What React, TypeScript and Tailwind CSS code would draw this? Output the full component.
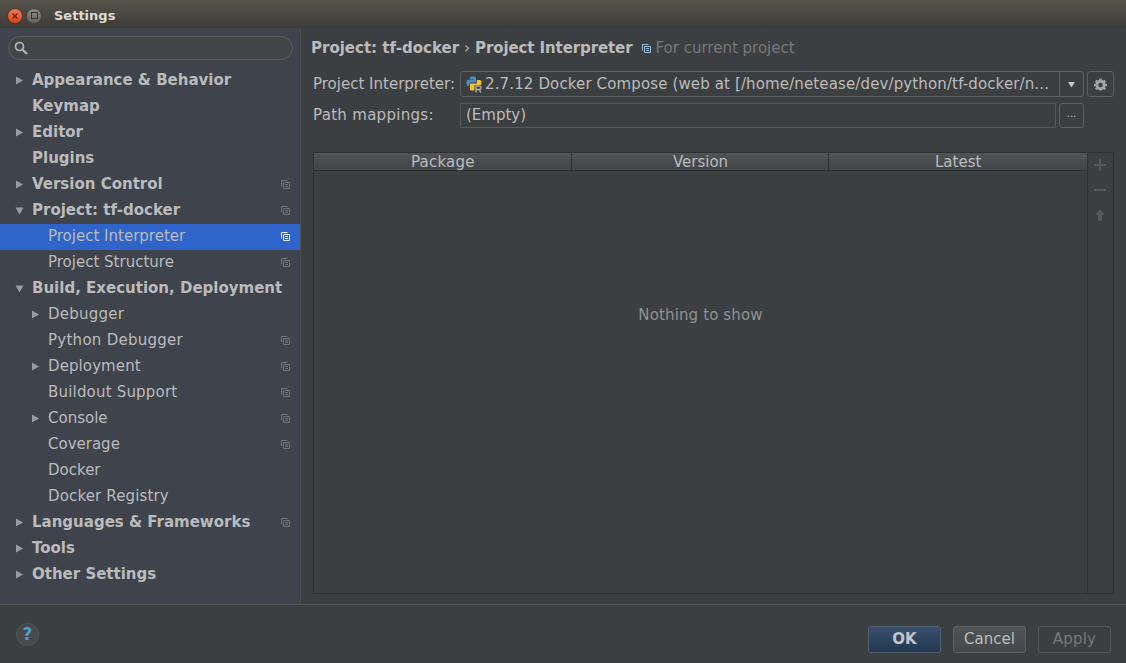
import React from 'react';

type NavItem = {
  label: string;
  level: 0 | 1;
  bold?: boolean;
  arrow?: 'right' | 'down';
  copy?: boolean;
  selected?: boolean;
  track?: string;
};

const navItems: NavItem[] = [
  { label: 'Appearance & Behavior', level: 0, bold: true, arrow: 'right' },
  { label: 'Keymap', level: 0, bold: true },
  { label: 'Editor', level: 0, bold: true, arrow: 'right' },
  { label: 'Plugins', level: 0, bold: true },
  { label: 'Version Control', level: 0, bold: true, arrow: 'right', copy: true },
  { label: 'Project: tf-docker', level: 0, bold: true, arrow: 'down', copy: true },
  { label: 'Project Interpreter', level: 1, copy: true, selected: true },
  { label: 'Project Structure', level: 1, copy: true },
  { label: 'Build, Execution, Deployment', level: 0, bold: true, arrow: 'down' },
  { label: 'Debugger', level: 1, arrow: 'right', track: 'tracking-[0.25px]' },
  { label: 'Python Debugger', level: 1, copy: true, track: 'tracking-[0.27px]' },
  { label: 'Deployment', level: 1, arrow: 'right', copy: true, track: 'tracking-[0.1px]' },
  { label: 'Buildout Support', level: 1, copy: true, track: 'tracking-[0.19px]' },
  { label: 'Console', level: 1, arrow: 'right', copy: true },
  { label: 'Coverage', level: 1, copy: true },
  { label: 'Docker', level: 1 },
  { label: 'Docker Registry', level: 1, track: 'tracking-[0.14px]' },
  { label: 'Languages & Frameworks', level: 0, bold: true, arrow: 'right', copy: true },
  { label: 'Tools', level: 0, bold: true, arrow: 'right' },
  { label: 'Other Settings', level: 0, bold: true, arrow: 'right' },
];

function CopyIcon({ color, className }: { color: string; className?: string }) {
  return (
    <svg className={className} width="9" height="9" viewBox="0 0 9 9" fill="none" stroke={color}>
      <path d="M2.5 8.5V2.5H8.5V8.5H2.5Z" />
      <path d="M0.5 6.5V0.5H6.5" />
      <path d="M4 4.5H7M4 6.5H7" />
    </svg>
  );
}

function Arrow({ dir }: { dir: 'right' | 'down' }) {
  return (
    <svg width="9" height="9" viewBox="0 0 9 9" fill="#9a9da0">
      {dir === 'right' ? <path d="M1 0.5L8 4.5L1 8.5Z" /> : <path d="M0.5 1.5H8.5L4.5 8.5Z" />}
    </svg>
  );
}

function NavRow({ item }: { item: NavItem }) {
  return (
    <div className={`flex items-center h-[26px] pb-[2px] pr-[10px] ${item.selected ? 'bg-[#2f65ca]' : ''}`}>
      <div className={`flex w-[9px] shrink-0 items-center ${item.level === 1 ? 'ml-[31px] mr-[8px]' : 'ml-[15px] mr-[8px]'}`}>
        {item.arrow && <Arrow dir={item.arrow} />}
      </div>
      <span className={`flex-1 whitespace-nowrap ${item.bold ? 'font-bold' : ''} ${item.track ?? ''} text-[#bbbbbb]`}>{item.label}</span>
      {item.copy && <CopyIcon color={item.selected ? '#e8ecf4' : '#70757c'} />}
    </div>
  );
}

function PythonIcon() {
  return (
    <svg className="shrink-0" width="16" height="17" viewBox="0 0 16 17">
      <path d="M4 1.5C4 .8 5 .5 7 .5S10 1 10 1.8V6.5H5C3.8 6.5 3.2 7.2 3.2 8.5V10H2C.8 10 .5 8.5 .5 6.8S1 3.8 2.2 3.8H7V3.2H4Z" fill="#4b8bbe" />
      <path d="M10.8 4H13.5C14.8 4 15.5 5 15.5 6.8S15 10 13.8 10H9V10.6H12V12H8V11C8 8.5 8.5 7.5 10 7.5H10.8Z" fill="#f2c230" />
      <path d="M4 7.5H9V13C9 14 8.5 14.5 6.5 14.5S4 14 4 13Z" fill="#f2c230" />
      <path d="M8.5 9H16V17H8.5Z" fill="#3c3f41" />
      <path d="M10 16.5V10H13C14.2 10 15 10.6 15 11.8S14.2 13.5 13 13.5H10.5M12.8 13.5L15 16.5" fill="none" stroke="#a8abae" strokeWidth="1.4" />
    </svg>
  );
}

export default function App() {
  return (
    <div className="flex flex-col w-[1126px] h-[663px] overflow-hidden bg-[#3c3f41] text-[15px] text-[#bbbbbb] font-['DejaVu_Sans',sans-serif]">
      {/* title bar */}
      <div className="flex items-center h-[28px] shrink-0 bg-gradient-to-b from-[#57544b] to-[#3c3b37] pl-[7px] pt-[3px]">
        <div className="flex h-[16px] w-[16px] items-center justify-center rounded-full bg-gradient-to-b from-[#f5794a] to-[#db4417] border border-[#4a3a30]">
          <svg width="8" height="8" viewBox="0 0 8 8" stroke="#5a2410" strokeWidth="1.2"><path d="M1.5 1.5L6.5 6.5M6.5 1.5L1.5 6.5" /></svg>
        </div>
        <div className="ml-[3px] flex h-[16px] w-[16px] items-center justify-center rounded-full bg-gradient-to-b from-[#8a8980] to-[#65645d] border border-[#45443e]">
          <div className="h-[7px] w-[7px] border border-[#35342f]" />
        </div>
        <span className="ml-[12px] text-[13px] font-bold text-[#dfdbd2]">Settings</span>
      </div>

      <div className="flex flex-1 min-h-0">
        {/* sidebar */}
        <div className="flex flex-col w-[301px] shrink-0 bg-[#3e434c] border-r border-[#4d4f51] pt-[8px]">
          <div className="mx-[8px] mr-[7px] flex h-[24px] items-center rounded-full border border-[#5e6060] bg-[#414547] pl-[4px]">
            <svg width="16" height="16" viewBox="0 0 16 16" fill="none" stroke="#b4b6b8" strokeWidth="1.7">
              <circle cx="6.5" cy="6.5" r="4" />
              <path d="M9.5 9.5L14 14" strokeWidth="2.2" />
            </svg>
          </div>
          <div className="mt-[8px] mr-[1px] w-[300px]">
            {navItems.map((item) => (
              <NavRow key={item.label} item={item} />
            ))}
          </div>
        </div>

        {/* main */}
        <div className="flex flex-col flex-1 min-w-0 pl-[12px] pr-[12px]">
          <div className="flex items-center h-[20px] mt-[10px] -ml-[2px]">
            <span className="font-bold">Project: tf-docker</span>
            <span className="mx-[5px]">›</span>
            <span className="font-bold tracking-[-0.1px]">Project Interpreter</span>
            <CopyIcon color="#9fc0dc" className="ml-[10px]" />
            <span className="ml-[4px] text-[#787878]">For current project</span>
          </div>

          <div className="flex items-center h-[26px] mt-[13px]">
            <span className="w-[147px] shrink-0 whitespace-nowrap">Project Interpreter:</span>
            <div className="flex flex-1 min-w-0 h-[26px] rounded-[3px] border border-[#5e6060]">
              <div className="flex flex-1 min-w-0 items-center pl-[5px]">
                <PythonIcon />
                <span className="ml-[3px] whitespace-nowrap tracking-[0.13px]">2.7.12 Docker Compose (web at [/home/netease/dev/python/tf-docker/n...</span>
              </div>
              <div className="flex w-[24px] shrink-0 items-center justify-center border-l border-[#5e6060]">
                <svg width="9" height="7" viewBox="0 0 9 7" fill="#c4c6c8"><path d="M1 1H8L4.5 6.5Z" /></svg>
              </div>
            </div>
            <div className="flex h-[26px] w-[27px] shrink-0 ml-[3px] items-center justify-center rounded-[3px] border border-[#5e6060]">
              <svg width="13" height="13" viewBox="0 0 14 14" fill="#a2a5a8">
                <path fillRule="evenodd" d="M5.8 1H8.2L8.6 2.7L9.9 3.2L11.4 2.3L12.9 3.9L11.9 5.4L12.4 6.6L14 7V9L12.4 9.4L11.9 10.6L12.9 12.1L11.4 13.5L9.9 12.7L8.6 13.2L8.2 14H5.8L5.4 13.2L4.1 12.7L2.6 13.5L1.1 12.1L2.1 10.6L1.6 9.4L0 9V7L1.6 6.6L2.1 5.4L1.1 3.9L2.6 2.3L4.1 3.2L5.4 2.7ZM7 5.6A2.4 2.4 0 1 0 7 10.4A2.4 2.4 0 1 0 7 5.6Z" transform="translate(0 -.5)" />
              </svg>
            </div>
          </div>

          <div className="flex items-center h-[25px] mt-[6px]">
            <span className="w-[147px] shrink-0 tracking-[0.3px]">Path mappings:</span>
            <div className="flex w-[596px] h-[25px] items-center border border-[#55585a] pl-[5px]">(Empty)</div>
            <div className="flex w-[25px] h-[25px] ml-[3px] items-center justify-center rounded-[3px] border border-[#5e6060] text-[10px] leading-none pb-[4px]">...</div>
          </div>

          {/* package table */}
          <div className="flex flex-1 min-h-0 mt-[24px] mb-[10px] border border-[#2e3032]">
            <div className="flex flex-col flex-1 min-w-0">
              <div className="grid grid-cols-3 h-[18px] shrink-0 border-b border-[#2e3032] bg-gradient-to-b from-[#505355] to-[#414446] text-[#bbbbbb] leading-[19px] text-center">
                <div className="border-r border-[#2e3032] tracking-[0.2px] pl-[1px]">Package</div>
                <div className="border-r border-[#2e3032] pl-[1px]">Version</div>
                <div>Latest</div>
              </div>
              <div className="flex flex-1 items-center justify-center text-[#8f9193] tracking-[0.13px] pb-[134px]">Nothing to show</div>
            </div>
            <div className="flex flex-col items-center w-[26px] shrink-0 border-l border-[#2e3032] pt-[5px] pr-[1px] gap-[11px]">
              <svg width="14" height="14" viewBox="0 0 14 14" stroke="#55585a" strokeWidth="2"><path d="M7 1V13M1 7H13" /></svg>
              <svg width="14" height="14" viewBox="0 0 14 14" stroke="#55585a" strokeWidth="2"><path d="M1 7H13" /></svg>
              <svg width="14" height="14" viewBox="0 0 14 14" fill="#55585a"><path d="M7 1L12 7H9V13H5V7H2Z" /></svg>
            </div>
          </div>
        </div>
      </div>

      {/* footer */}
      <div className="flex items-center h-[59px] shrink-0 border-t border-[#555759] pl-[16px] pr-[15px]">
        <div className="flex h-[23px] w-[23px] items-center justify-center rounded-full border border-[#55585a] bg-[#46494b] text-[17px] font-bold text-[#4b9fd5] leading-none">?</div>
        <div className="flex-1" />
        <div className="flex gap-[12px] pt-[10px]">
          <button type="button" className="flex h-[27px] w-[73px] items-center justify-center rounded-[3px] border border-[#4f5f70] bg-gradient-to-b from-[#384f6b] to-[#233750] font-bold text-[#c4c6c8]">OK</button>
          <button type="button" className="flex h-[27px] w-[73px] items-center justify-center rounded-[3px] border border-[#5e6060] bg-gradient-to-b from-[#505355] to-[#45484a] text-[#bbbbbb]">Cancel</button>
          <button type="button" className="flex h-[27px] w-[73px] items-center justify-center rounded-[3px] border border-[#55585a] text-[#777777] tracking-[0.2px]">Apply</button>
        </div>
      </div>
    </div>
  );
}
